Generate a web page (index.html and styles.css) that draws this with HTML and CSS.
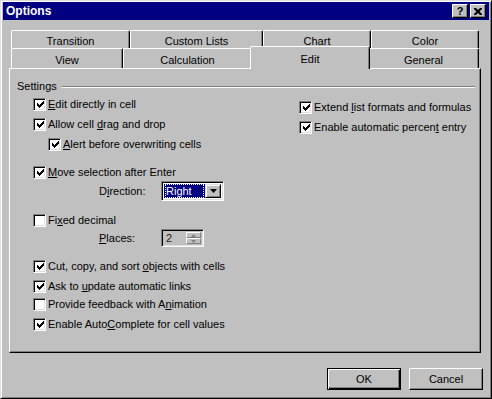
FILE: index.html
```html
<!DOCTYPE html>
<html lang="en">

<head>
    <meta charset="UTF-8">
    <title>Options</title>
    <link rel="stylesheet" href="styles.css">
</head>

<body>
    <svg class="defs" width="0" height="0">
        <symbol id="check" viewBox="0 0 7 7">
            <path d="M0 2h1v1h1v1h1v-1h1v-1h1v-1h1v-1h1v3h-1v1h-1v1h-1v1h-1v1h-1v-1h-1v-1h-1z" fill="#000" />
        </symbol>
    </svg>

    <div class="window">
        <div class="titlebar">
            <span class="title">Options</span>
            <div class="caption-buttons">
                <div class="cap-btn">?</div>
                <div class="cap-btn">
                    <svg width="8" height="7" viewBox="0 0 8 7">
                        <path d="M0 0h2l2 2l2-2h2v1l-2.5 2.5l2.5 2.5v1h-2l-2-2l-2 2h-2v-1l2.5-2.5l-2.5-2.5z" fill="#000" />
                    </svg>
                </div>
            </div>
        </div>

        <div class="tabs">
            <div class="tab-row">
                <div class="tab tab-transition">Transition</div>
                <div class="tab tab-lists">Custom Lists</div>
                <div class="tab tab-chart">Chart</div>
                <div class="tab tab-color">Color</div>
            </div>
            <div class="tab-row front">
                <div class="tab tab-view">View</div>
                <div class="tab tab-calc">Calculation</div>
                <div class="tab tab-edit selected">Edit</div>
                <div class="tab tab-general">General</div>
            </div>
        </div>

        <div class="panel">
            <div class="group-head">
                <span>Settings</span>
                <div class="rule"></div>
            </div>
            <div class="columns">
                <div class="col-left">
                    <div class="row">
                        <span class="cb"><svg width="7" height="7"><use href="#check" /></svg></span>
                        <span><u>E</u>dit directly in cell</span>
                    </div>
                    <div class="row">
                        <span class="cb"><svg width="7" height="7"><use href="#check" /></svg></span>
                        <span>Allow cell <u>d</u>rag and drop</span>
                    </div>
                    <div class="row nested">
                        <span class="cb"><svg width="7" height="7"><use href="#check" /></svg></span>
                        <span><u>A</u>lert before overwriting cells</span>
                    </div>

                    <div class="row section">
                        <span class="cb"><svg width="7" height="7"><use href="#check" /></svg></span>
                        <span><u>M</u>ove selection after Enter</span>
                    </div>
                    <div class="row field">
                        <span class="field-label">D<u>i</u>rection:</span>
                        <div class="combo">
                            <div class="combo-value"><span class="focus">Right</span></div>
                            <div class="combo-arrow">
                                <svg width="7" height="4" viewBox="0 0 7 4"><path d="M0 0h7l-3.5 4z" fill="#000" /></svg>
                            </div>
                        </div>
                    </div>

                    <div class="row section">
                        <span class="cb"></span>
                        <span>Fi<u>x</u>ed decimal</span>
                    </div>
                    <div class="row field spin-row">
                        <span class="field-label"><u>P</u>laces:</span>
                        <div class="spin">
                            <div class="spin-value">2</div>
                            <div class="spin-buttons">
                                <div class="spin-btn">
                                    <svg width="5" height="3" viewBox="0 0 5 3"><path d="M2.5 0l2.5 3h-5z" fill="#808080" /></svg>
                                </div>
                                <div class="spin-btn">
                                    <svg width="5" height="3" viewBox="0 0 5 3"><path d="M0 0h5l-2.5 3z" fill="#808080" /></svg>
                                </div>
                            </div>
                        </div>
                    </div>

                    <div class="row section">
                        <span class="cb"><svg width="7" height="7"><use href="#check" /></svg></span>
                        <span>Cut, copy, and sort <u>o</u>bjects with cells</span>
                    </div>
                    <div class="row">
                        <span class="cb"><svg width="7" height="7"><use href="#check" /></svg></span>
                        <span>Ask to <u>u</u>pdate automatic links</span>
                    </div>
                    <div class="row tight">
                        <span class="cb"></span>
                        <span>Provide feedback with A<u>n</u>imation</span>
                    </div>
                    <div class="row">
                        <span class="cb"><svg width="7" height="7"><use href="#check" /></svg></span>
                        <span>Enable Auto<u>C</u>omplete for cell values</span>
                    </div>
                </div>

                <div class="col-right">
                    <div class="row">
                        <span class="cb"><svg width="7" height="7"><use href="#check" /></svg></span>
                        <span>Extend <u>l</u>ist formats and formulas</span>
                    </div>
                    <div class="row">
                        <span class="cb"><svg width="7" height="7"><use href="#check" /></svg></span>
                        <span>Enable automatic percen<u>t</u> entry</span>
                    </div>
                </div>
            </div>
        </div>

        <div class="footer">
            <div class="btn default">OK</div>
            <div class="btn">Cancel</div>
        </div>
    </div>
</body>

</html>
```

FILE: styles.css
```css
html,
body {
    margin: 0;
    padding: 0;
}

body {
    font-family: "Liberation Sans", Arial, sans-serif;
    font-size: 11px;
    color: #000;
    background-color: #c0c0c0;
}

u {
    text-decoration-thickness: 1px;
    text-underline-offset: 1px;
}

.defs {
    position: absolute;
}

/* window frame */

.window {
    width: 492px;
    height: 399px;
    box-sizing: border-box;
    border: 1px solid;
    border-color: #dfdfdf #000 #000 #dfdfdf;
    box-shadow: inset 1px 1px #fff, inset -1px -1px #808080;
    padding: 1px 2px 2px;
    display: flex;
    flex-direction: column;
    background-color: #c0c0c0;
}

.titlebar {
    height: 18px;
    flex: none;
    background-color: #000080;
    color: #fff;
    display: flex;
    align-items: center;
    justify-content: space-between;
    padding: 0 3px 0 3px;
}

.title {
    font-weight: bold;
    font-size: 12px;
}

.caption-buttons {
    display: flex;
    gap: 2px;
}

.cap-btn {
    width: 16px;
    height: 14px;
    box-sizing: border-box;
    border: 1px solid;
    border-color: #fff #000 #000 #fff;
    box-shadow: inset -1px -1px #808080;
    background-color: #c0c0c0;
    color: #000;
    font-weight: bold;
    display: flex;
    align-items: center;
    justify-content: center;
    line-height: 1;
}

/* tabs */

.tabs {
    margin: 10px 0 0 8px;
}

.tab-row {
    display: flex;
}

.tab {
    box-sizing: border-box;
    height: 18px;
    padding-top: 2px;
    border: 1px solid;
    border-bottom: none;
    border-color: #fff #000 #000 #fff;
    border-radius: 2px 2px 0 0;
    box-shadow: inset -1px 0 #808080;
    background-color: #c0c0c0;
    display: flex;
    align-items: center;
    justify-content: center;
}

.front .tab {
    height: 20px;
}

.front .tab.selected {
    height: 23px;
    margin: -2px -2px -1px;
    padding-top: 1px;
    position: relative;
    z-index: 1;
}

.tab-transition { width: 119px; }
.tab-lists { width: 133px; }
.tab-chart { width: 108px; }
.tab-color { width: 108px; }
.tab-view { width: 112px; }
.tab-calc { width: 129px; }
.tab-edit { width: 120px; }
.tab-general { width: 111px; }

/* page */

.panel {
    margin-left: 6px;
    width: 472px;
    height: 285px;
    flex: none;
    box-sizing: border-box;
    border: 1px solid;
    border-color: #fff #000 #000 #fff;
    box-shadow: inset -1px -1px #808080;
    padding: 10px 5px 0 7px;
}

.group-head {
    display: flex;
    align-items: center;
    height: 14px;
}

.rule {
    flex: 1;
    margin: 2px 0 0 5px;
    border-top: 1px solid #808080;
    border-bottom: 1px solid #fff;
}

.columns {
    display: flex;
    margin-top: 2px;
}

.col-left {
    width: 282px;
    flex: none;
}

.col-right {
    flex: 1;
    margin-top: 3px;
}

.row {
    display: flex;
    align-items: center;
    height: 18px;
    padding-left: 16px;
    margin-top: 2px;
    white-space: nowrap;
}

.col-right .row {
    padding-left: 0;
}

.row:first-child {
    margin-top: 0;
}

.row.nested {
    padding-left: 31px;
}

.row.section {
    margin-top: 10px;
}

.row.tight {
    margin-top: 0;
}

.row.field {
    height: 20px;
    margin-top: 0;
    padding-left: 82px;
}

.row.spin-row {
    height: 18px;
}

.cb {
    width: 13px;
    height: 13px;
    flex: none;
    box-sizing: border-box;
    border: 1px solid;
    border-color: #808080 #fff #fff #808080;
    box-shadow: inset 1px 1px #000, inset -1px -1px #dfdfdf;
    background-color: #fff;
    display: flex;
    align-items: center;
    justify-content: center;
    margin-right: 2px;
}

.cb svg {
    display: block;
    margin: 1px 0 0 1px;
}

.field-label {
    width: 62px;
}

/* combo box */

.combo {
    width: 63px;
    height: 20px;
    box-sizing: border-box;
    border: 1px solid;
    border-color: #808080 #fff #fff #808080;
    box-shadow: inset 1px 1px #000, inset -1px -1px #dfdfdf;
    background-color: #fff;
    padding: 2px;
    display: flex;
}

.combo-value {
    flex: 1;
    background-color: #000080;
    color: #fff;
    display: flex;
    align-items: center;
    padding: 0 1px;
}

.focus {
    flex: 1;
    align-self: stretch;
    display: flex;
    align-items: center;
    padding-left: 1px;
    outline: 1px dotted #fff;
    outline-offset: -1px;
}

.combo-arrow {
    width: 16px;
    flex: none;
    box-sizing: border-box;
    border: 1px solid;
    border-color: #dfdfdf #000 #000 #dfdfdf;
    box-shadow: inset 1px 1px #fff, inset -1px -1px #808080;
    background-color: #c0c0c0;
    display: flex;
    align-items: center;
    justify-content: center;
}

/* spinner */

.spin {
    width: 43px;
    height: 18px;
    box-sizing: border-box;
    border: 1px solid;
    border-color: #808080 #fff #fff #808080;
    box-shadow: inset 1px 1px #000, inset -1px -1px #dfdfdf;
    background-color: #c0c0c0;
    padding: 2px;
    display: flex;
}

.spin-value {
    flex: 1;
    display: flex;
    align-items: center;
    padding-left: 2px;
    color: #202020;
}

.spin-buttons {
    width: 15px;
    display: flex;
    flex-direction: column;
}

.spin-btn {
    flex: 1;
    box-sizing: border-box;
    border: 1px solid;
    border-color: #fff #808080 #808080 #fff;
    background-color: #c0c0c0;
    display: flex;
    align-items: center;
    justify-content: center;
}

/* buttons */

.footer {
    display: flex;
    justify-content: flex-end;
    gap: 8px;
    margin: 15px 6px 0 0;
}

.btn {
    width: 74px;
    height: 22px;
    box-sizing: border-box;
    border: 1px solid;
    border-color: #fff #000 #000 #fff;
    box-shadow: inset -1px -1px #808080;
    background-color: #c0c0c0;
    display: flex;
    align-items: center;
    justify-content: center;
}

.btn.default {
    border-color: #000;
    box-shadow: inset 1px 1px #fff, inset -1px -1px #000, inset -2px -2px #808080;
}
```
